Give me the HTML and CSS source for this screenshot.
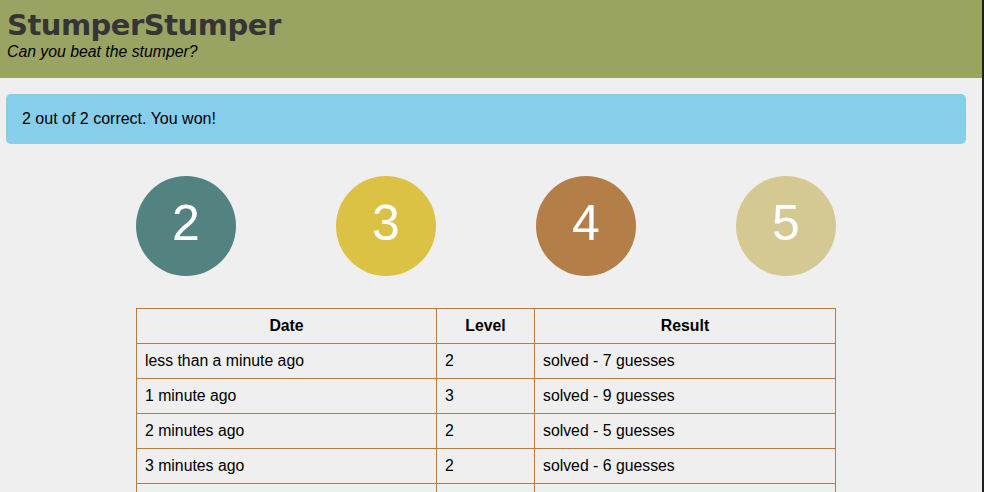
FILE: index.html
```html
<!DOCTYPE html>
<html>
<head>
<meta charset="utf-8">
<title>StumperStumper</title>
<link rel="stylesheet" href="styles.css">
</head>
<body>
<div class="frame">
  <header class="site-header">
    <h1 class="title">StumperStumper</h1>
    <p class="tagline">Can you beat the stumper?</p>
  </header>
  <main class="content">
    <div class="alert">2 out of 2 correct. You won!</div>
    <div class="levels">
      <div class="level level-2">2</div>
      <div class="level level-3">3</div>
      <div class="level level-4">4</div>
      <div class="level level-5">5</div>
    </div>
    <table class="history">
      <thead>
        <tr><th class="col-date">Date</th><th class="col-level">Level</th><th class="col-result">Result</th></tr>
      </thead>
      <tbody>
        <tr><td>less than a minute ago</td><td>2</td><td>solved - 7 guesses</td></tr>
        <tr><td>1 minute ago</td><td>3</td><td>solved - 9 guesses</td></tr>
        <tr><td>2 minutes ago</td><td>2</td><td>solved - 5 guesses</td></tr>
        <tr><td>3 minutes ago</td><td>2</td><td>solved - 6 guesses</td></tr>
        <tr><td>4 minutes ago</td><td>2</td><td>solved - 8 guesses</td></tr>
      </tbody>
    </table>
  </main>
</div>
</body>
</html>
```
FILE: styles.css
```css
html, body {
  margin: 0;
  padding: 0;
  height: 100%;
  overflow: hidden;
  background: #1e1e1e;
}
.frame {
  width: 982px;
  height: 100%;
  background: #efefef;
  font-family: "Liberation Sans", Arial, sans-serif;
  color: #000;
}
.site-header {
  background: #9aa462;
  height: 78px;
  padding: 8px 7px 0;
  box-sizing: border-box;
}
.title {
  margin: 0;
  font-family: "DejaVu Sans", sans-serif;
  font-weight: 700;
  font-size: 29px;
  line-height: 35px;
  letter-spacing: -0.5px;
  color: #353535;
}
.tagline {
  margin: 0;
  font-style: italic;
  font-size: 15.8px;
  line-height: 18px;
}
.content {
  width: 972px;
  padding-top: 16px;
}
.alert {
  margin: 0 6px;
  background: #87ceeb;
  border-radius: 5px;
  height: 50px;
  padding: 0 16px;
  display: flex;
  align-items: center;
  font-size: 16px;
}
.levels {
  width: 700px;
  margin: 32px auto 0;
  display: flex;
  justify-content: space-between;
}
.level {
  width: 100px;
  height: 100px;
  border-radius: 50%;
  display: flex;
  align-items: center;
  justify-content: center;
  padding-bottom: 6px;
  box-sizing: border-box;
  color: #fff;
  font-size: 50px;
}
.level-2 { background: #528381; }
.level-3 { background: #dbc245; }
.level-4 { background: #b47e48; }
.level-5 { background: #d5c993; }
.history {
  width: 700px;
  margin: 32px auto 0;
  border-collapse: collapse;
  font-size: 15.8px;
}
.history th, .history td {
  border: 1px solid #b97c40;
  height: 35px;
  padding: 0 8px;
  box-sizing: border-box;
}
.history th {
  text-align: center;
  font-weight: 700;
}
.history td { text-align: left; }
.col-date { width: 300px; }
.col-level { width: 98px; }
```
